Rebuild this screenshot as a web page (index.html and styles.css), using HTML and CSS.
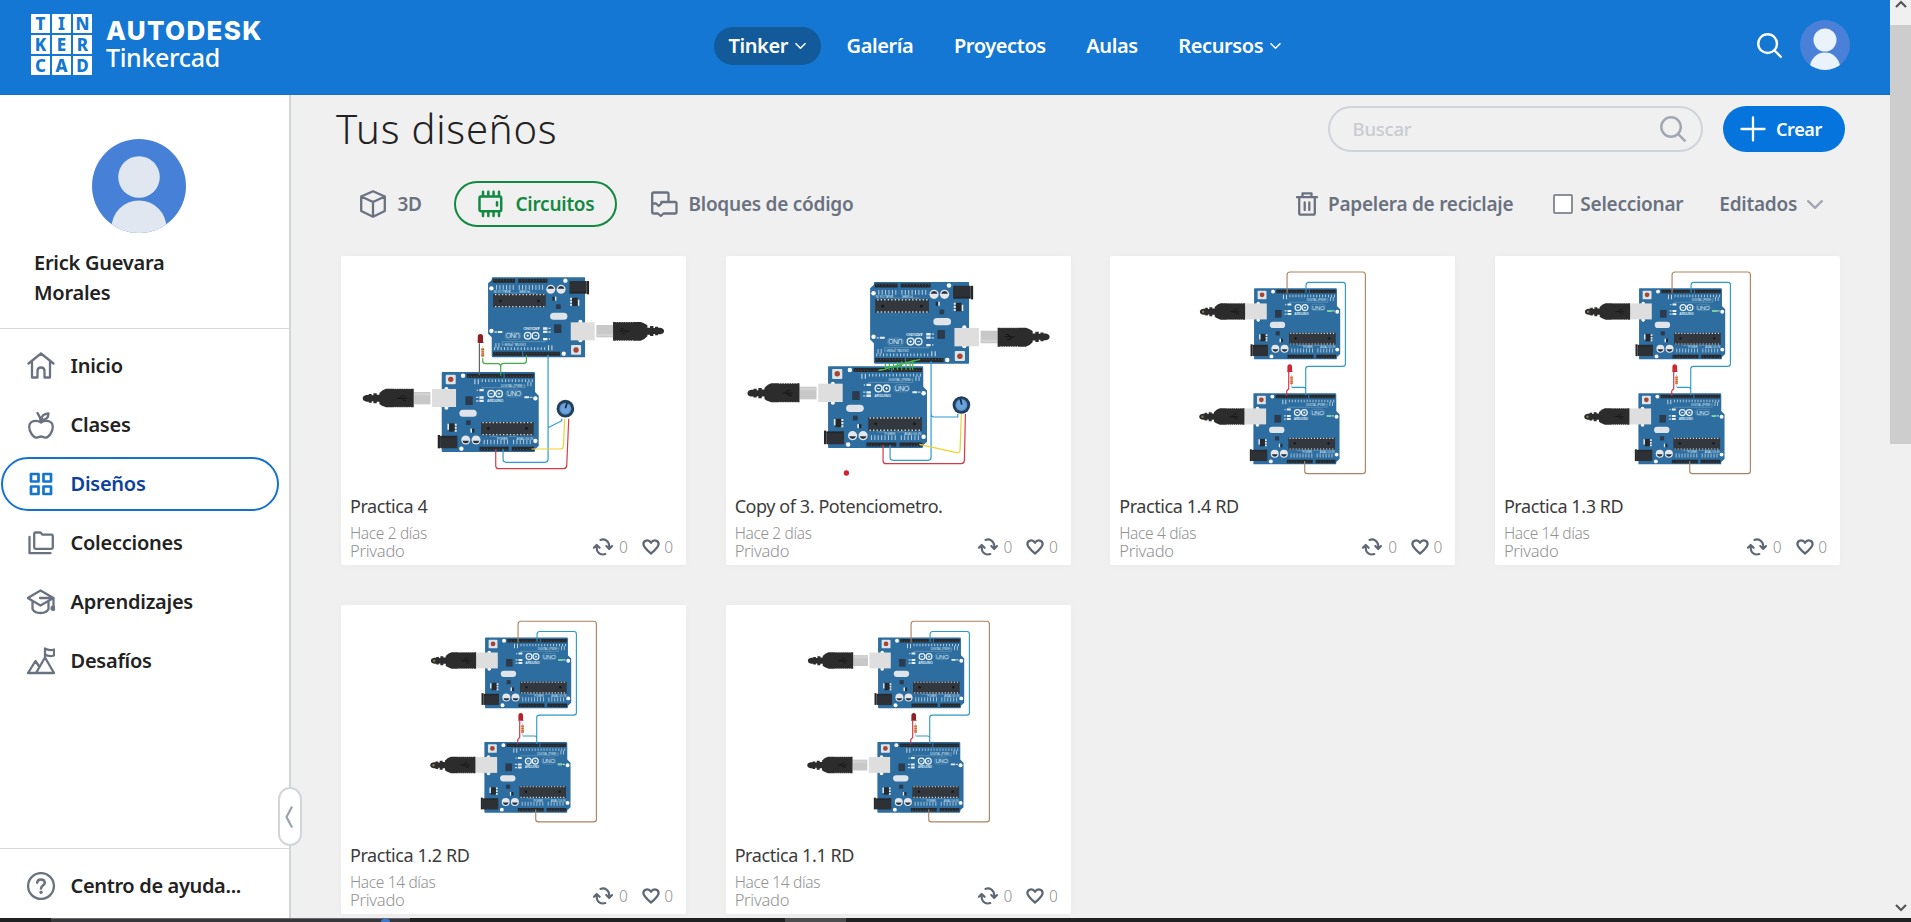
FILE: index.html
```html
<!DOCTYPE html>
<html lang="es">
<head>
<meta charset="utf-8">
<title>Tinkercad - Tus diseños</title>
<link rel="stylesheet" href="styles.css">
</head>
<body>
<svg class="sprites" aria-hidden="true">
  <symbol id="i-search" viewBox="0 0 24 24"><g fill="none" stroke="currentColor" stroke-width="2.300" stroke-linecap="round"><circle cx="10.2" cy="10.2" r="9"/><path d="M16.800 16.800 22.800 22.800"/></g></symbol>
  <symbol id="i-chev" viewBox="0 0 16 9"><path d="M1.200 1.200 8 7.800l6.800-6.600" fill="none" stroke="currentColor" stroke-width="2.400" stroke-linecap="round" stroke-linejoin="round"/></symbol>
  <symbol id="i-recycle" viewBox="0 0 20 18"><g fill="none" stroke="currentColor" stroke-width="2.100" stroke-linecap="round" stroke-linejoin="round"><path d="M7.500 1.900C12 .2 16.200 3.500 16.200 8v2.200M13.300 8l2.900 2.900L19 8M12.300 16.100C7.800 17.600 3.700 14.500 3.700 10V7.800M.9 9.800l2.800-2.900 2.900 2.900"/></g></symbol>
  <symbol id="i-heart" viewBox="0 0 18 16"><path d="M9 14.600C4.500 10.800 1.400 8.300 1.400 5.100 1.400 1.300 6.500-.1 9 3.700c2.500-3.800 7.600-2.400 7.600 1.400 0 3.200-3.100 5.700-7.600 9.500z" fill="none" stroke="currentColor" stroke-width="2.300" stroke-linejoin="round"/></symbol>

  <symbol id="board" viewBox="0 0 300 245" overflow="visible">
    <path d="M2 0H276q4 0 4 4V60l11 11V222l-11 10v4q0 4-4 4H2q-2 0-2-2V2q0-2 2-2z" fill="#2d6d9f"/>
    <g fill="#fff"><circle cx="64" cy="11" r="6.500"/><circle cx="281" cy="79" r="6.500"/><circle cx="281" cy="207" r="6.500"/><circle cx="59" cy="230" r="6.500"/><circle cx="14" cy="51" r="6"/><circle cx="14" cy="107" r="6"/></g>
    <rect x="12" y="8" width="30" height="29" rx="3" fill="#dbe4ea"/><circle cx="27" cy="22" r="8" fill="#a8442f"/>
    <rect x="-29" y="51" width="72" height="54" fill="#dedede"/>
    <rect x="71" y="73" width="22" height="26" fill="#2b3b4d"/>
    <rect x="53" y="113" width="52" height="21" rx="10.500" fill="#dfe4ea"/>
    <rect x="73" y="145" width="14" height="14" fill="#2b3b4d"/>
    <path d="M17 155h6v18h-6zM37 155h8v6h-8zM37 164h8v6h-8zM37 173h8v6h-8z" fill="#e4ebf0"/><rect x="22" y="154" width="17" height="25" fill="#26292d"/>
    <path d="M86 170h5v12h-5z" fill="#e4ebf0"/><path d="M91 170h7v12h-7z" fill="#222c38"/>
    <rect x="-12" y="189" width="7" height="40" fill="#24262a"/><rect x="-5" y="191" width="52" height="38" rx="3" fill="#2d3034"/><path d="M-3 195h42l6-4" fill="none" stroke="#16181b" stroke-width="1.500"/>
    <circle cx="72" cy="204" r="13.500" fill="#e3e6ea"/><circle cx="103" cy="204" r="13.500" fill="#e3e6ea"/>
    <path d="M62 206h20q-2 8-10 8t-10-8zM93 206h20q-2 8-10 8t-10-8z" fill="#23303f"/>
    <rect x="118" y="150" width="158" height="40" fill="#33383e"/>
    <path d="M122 152H274M122 188H274" stroke="#d4dbe0" stroke-width="4" stroke-dasharray="4 6.300"/>
    <circle cx="140" cy="169" r="4" fill="#14171a"/><circle cx="254" cy="169" r="4" fill="#14171a"/>
    <path d="M75 5h110v12H75zM189 5h87v12H189zM113 224h88v12h-88zM210 224h67v12h-67z" fill="#272a2d"/>
    <path d="M80 13H274M118 232H274" stroke="#626a70" stroke-width="3" stroke-dasharray="2 7"/>
    <path d="M98 29h14" stroke="#d5e2ec" stroke-width="15" stroke-dasharray="3 7"/>
    <path d="M120 26H276" stroke="#d5e2ec" stroke-width="8" stroke-dasharray="3 7" opacity=".85"/>
    <path d="M257 36h18" stroke="#d5e2ec" stroke-width="14" stroke-dasharray="3 6" opacity=".8"/>
    <path d="M126 210H200M214 210H274" stroke="#d5e2ec" stroke-width="14" stroke-dasharray="3 7" opacity=".8"/>
    <path d="M118 47H250M146 193h22M202 193h22" stroke="#c3d6e4" stroke-width="1.200" opacity=".8"/>
    <text x="178" y="44" class="silk" font-size="9.500" textLength="72">DIGITAL (PWM~)</text>
    <text x="166" y="203" class="silk" font-size="9" textLength="32">POWER</text>
    <text x="224" y="203" class="silk" font-size="9" textLength="50">ANALOG IN</text>
    <text x="136" y="90" class="silk silk-b" font-size="11" textLength="49">ARDUINO</text>
    <g fill="none" stroke="#edf4f8" stroke-width="4"><circle cx="148.500" cy="65" r="10"/><circle cx="172" cy="65" r="10"/></g>
    <path d="M144 65h8M168 65h8M172 61v8" stroke="#edf4f8" stroke-width="2.500"/>
    <rect x="193" y="54" width="47" height="21" rx="10" fill="none" stroke="#8fb3cc" stroke-width="1.200"/>
    <text x="196" y="72" class="silk" font-size="20" textLength="42">UNO</text>
    <path d="M113 51h13v7h-13zM113 73h13v7h-13zM113 83h13v7h-13zM248 73h14v6h-14z" fill="#e9f0f5"/>
    <path d="M103 76h7M103 87h7M105 55h4M264 76h8" stroke="#bcd2e1" stroke-width="4"/>
  </symbol>
  <symbol id="plug" viewBox="0 0 200 60" overflow="visible">
    <rect x="152" y="11" width="50" height="37" fill="#c8c8c8"/><rect x="152" y="15" width="50" height="6" fill="#d4d4d4"/>
    <path d="M10 20q-11 2-11 10t11 10h7v3h9v-4h5v6h10v-5h8v7q6 5 12 7l8 3H152V1H69q-10 2-20 13v5h-8v-4H31v6h-5v-4h-9v3z" fill="#2c2c2c"/>
    <path d="M92 1H148M92 57H148" stroke="#fff" stroke-width="2.400" stroke-dasharray="3 4"/>
    <path d="M102 30h30M110 29l7-7h8M116 31l6 6h7" fill="none" stroke="#171717" stroke-width="3"/>
  </symbol>
  <symbol id="unit" viewBox="0 0 300 245" overflow="visible"><use href="#plug" x="-236" y="49" width="200" height="60"/><use href="#board" width="300" height="245"/></symbol>
  <symbol id="unit-on" viewBox="0 0 300 245" overflow="visible"><use href="#plug" x="-182" y="49" width="200" height="60"/><circle cx="-172" cy="79" r="4" fill="#877b43"/><use href="#board" width="300" height="245"/><path d="M248 73h14v6h-14z" fill="#65d78c"/></symbol>
  <symbol id="pot" viewBox="0 0 54 54" overflow="visible"><circle cx="27" cy="27" r="26.500" fill="#213f5a"/><circle cx="27" cy="27" r="18" fill="#5d94cc"/><circle cx="27" cy="27" r="14" fill="#6ba3dc"/></symbol>
  <symbol id="resistor" viewBox="0 0 12 34" overflow="visible"><path d="M6-8V40" stroke="#aaa" stroke-width="2"/><path d="M1 0h10v8l-1 3v8l1 3v8H1v-8l1-3v-8l-1-3z" fill="#e3a667"/><path d="M1 5h10M1 13h10M1 20h10M1 26h10" stroke="#b65329" stroke-width="3"/></symbol>
  <symbol id="dual" viewBox="0 0 1035 720" overflow="visible">
    <use href="#unit-on" x="0" y="0" width="300" height="245" transform="translate(447 115) scale(.888)"/>
    <use href="#unit-on" x="0" y="0" width="300" height="245" transform="translate(445 430) scale(.888)"/>
    <use href="#dual-wires" width="1035" height="720"/>
  </symbol>
  <symbol id="dual-wires" viewBox="0 0 1035 720" overflow="visible">
    <g fill="none" stroke-width="3.400"><path d="M546 130V75q0-9 9-9H773q8 0 8 9V663q0 8-8 8H607q-8 0-8-8V633" stroke="#ae8263"/><path d="M603 128V106q0-9 8-9H714q7 0 7 8V341q0 8-8 8H610q-8 0-8 8V436M602 418q0-6-7-6H560" stroke="#2c9ac6"/><path d="M551 366V416l-6 7V438" stroke="#cf2c3f"/></g>
    <use href="#resistor" x="554" y="379" width="11" height="27"/>
  </symbol>
</svg>

<div class="app">
  <div class="view">
    <header class="top">
      <div class="brand">
        <div class="tiles"><b>T</b><b>I</b><b>N</b><b>K</b><b>E</b><b>R</b><b>C</b><b>A</b><b>D</b></div>
        <div class="wordmark"><span class="autodesk">AUTODESK</span><span class="tinkercad">Tinkercad</span></div>
      </div>
      <nav class="nav">
        <a class="on">Tinker<svg class="nav-chev"><use href="#i-chev"/></svg></a>
        <a>Galería</a><a>Proyectos</a><a>Aulas</a>
        <a>Recursos<svg class="nav-chev"><use href="#i-chev"/></svg></a>
      </nav>
      <div class="top-right">
        <svg class="top-search"><use href="#i-search"/></svg>
        <svg class="top-avatar" viewBox="0 0 50 50"><clipPath id="ca"><circle cx="25" cy="25" r="25"/></clipPath><g clip-path="url(#ca)"><path d="M0 0h50v50H0z" fill="#4a80d8"/><circle cx="25" cy="20" r="11.500" fill="#eaf2fc"/><circle cx="25" cy="47.500" r="15" fill="#eaf2fc"/></g></svg>
      </div>
    </header>
    <div class="body">
      <aside class="side">
        <div class="profile">
          <svg class="avatar" viewBox="0 0 94 94"><clipPath id="cb"><circle cx="47" cy="47" r="47"/></clipPath><g clip-path="url(#cb)"><path d="M0 0h94v94H0z" fill="#4780d7"/><circle cx="47" cy="38" r="20.800" fill="#e0e7f1"/><circle cx="47" cy="89" r="27.500" fill="#e0e7f1"/></g></svg>
          <div class="name">Erick Guevara<br>Morales</div>
        </div>
        <ul class="menu">
          <li><svg class="ico" viewBox="0 0 28 28"><path d="M1.500 11.500 14 1.500l12.500 10M5 9.500V25.500h5.500V19q0-3.500 3.500-3.500t3.500 3.500v6.500H23V9.500"/></svg><span>Inicio</span></li>
          <li><svg class="ico" viewBox="0 0 28 28"><path d="M14 11.500C10 8.800 2.200 9 2.200 16c0 5 4.300 10.700 7.500 10.700 2 0 2.400-1.200 4.300-1.200s2.300 1.200 4.300 1.200c3.200 0 7.500-5.700 7.500-10.700 0-7-7.800-7.200-11.800-4.500zM14 11.500Q13.500 6 10.500 2M14.500 9q-.5-6 7-6.500 0 6.500-7 6.500z"/></svg><span>Clases</span></li>
          <li class="on"><svg class="ico" viewBox="0 0 28 28"><path d="M4 4h7.500v7.500H4zM16.500 4H24v7.500h-7.500zM4 16.500h7.500V24H4zM16.500 16.500H24V24h-7.500z"/></svg><span>Diseños</span></li>
          <li><svg class="ico" viewBox="0 0 28 28"><path d="M2.500 8V24.200H23.500M8.500 3.500h5l2 2.200h9q1.300 0 1.300 1.300v11.500q0 1.300-1.300 1.300h-16q-1.300 0-1.300-1.300V4.800q0-1.300 1.300-1.300z"/></svg><span>Colecciones</span></li>
          <li><svg class="ico" viewBox="0 0 28 28"><path d="M.8 10 13.500 2.500 26.500 10 13.500 17.500zM13 10H26.500v10M5.500 13.500V21q2 4 8 4t8-4v-7.500"/><circle cx="26.200" cy="20.300" r="1.600" fill="currentColor"/></svg><span>Aprendizajes</span></li>
          <li><svg class="ico" viewBox="0 0 28 28"><path d="M1 26 8.500 14l4 6M1 26H27L18 10.500 9 26M18 10.500V1.500q4 2.500 9 1v6q-5 1.500-9-1"/></svg><span>Desafíos</span></li>
        </ul>
        <div class="help"><svg class="ico" viewBox="0 0 28 28"><circle cx="14" cy="14" r="12.900"/><path d="M10.200 10.700q.3-3.200 3.800-3.200t3.800 3.200c0 2.800-3.800 2.900-3.800 5.800" stroke-width="2.500"/><circle cx="14" cy="20.300" r="1.300" fill="currentColor" stroke-width=".8"/></svg><span>Centro de ayuda...</span></div>
        <div class="handle"><svg viewBox="0 0 8 22"><path d="M6.700 1.300 1.500 11l5.200 9.700" fill="none" stroke="#9aa2ad" stroke-width="2.200" stroke-linecap="round" stroke-linejoin="round"/></svg></div>
      </aside>
      <main class="main">
        <div class="head">
          <h1>Tus diseños</h1>
          <div class="search"><span>Buscar</span><svg><use href="#i-search"/></svg></div>
          <div class="create"><svg viewBox="0 0 26 26"><path d="M13 1.500v23M1.500 13h23" stroke="#fff" stroke-width="2.300" stroke-linecap="round"/></svg>Crear</div>
        </div>
        <div class="tabs">
          <span class="tab t3d"><svg class="ico" viewBox="0 0 28 28"><path d="M14 1.300 25.800 6.500V21L14 26.700 2.200 21V6.500zM2.200 6.500 14 12l11.800-5.500M14 12v14.700" /></svg>3D</span>
          <span class="tab on"><svg class="ico" viewBox="0 0 28 28"><path d="M3.700 6.500H23q1.200 0 1.200 1.200V20q0 1.200-1.200 1.200H3.700Q2.500 21.200 2.500 20v-2.500M2.500 17.500v-7M2.500 10.500V7.700Q2.500 6.500 3.700 6.500M6 1.800v4M11.300 1.800v4M16.600 1.800v4M22 1.800v4M6 22v4M11.300 22v4M16.600 22v4M22 22v4M20 12.200v3.400"/></svg>Circuitos</span>
          <span class="tab code"><svg class="ico" viewBox="0 0 28 28"><path d="M3.500 2.500H17q1.500 0 1.500 1.500v8H25q1.500 0 1.500 1.500V22q0 1.500-1.500 1.500H13.500L10.800 26 8 23.500H4Q2.200 23.500 2.200 22V4Q2.200 2.500 3.500 2.500zM2.200 13.500H6l2.700 2.500 2.600-2.500v-1.500h7.200"/></svg>Bloques de código</span>
          <span class="tool trash"><svg class="ico" viewBox="0 0 22 24"><path d="M1 5.200h20M6.500 5V1.300h9V5M3.200 5.500V21q0 1.700 1.700 1.700H17q1.800 0 1.800-1.700V5.500M8.700 10.500v7.500M13.300 10.500v7.500"/></svg>Papelera de reciclaje</span>
          <span class="tool select"><i></i>Seleccionar</span>
          <span class="tool sort">Editados<svg><use href="#i-chev"/></svg></span>
        </div>
        <div class="grid">
          <article class="card">
            <svg class="thumb" viewBox="18 18 1035 714">
              <g transform="translate(750 322) rotate(180)"><use href="#unit" width="300" height="245"/></g>
              <use href="#unit" x="320" y="366" width="300" height="245"/>
              <g fill="none" stroke-width="3.600"><path d="M433 280V376" stroke="#636363"/><path d="M443 325v8q0 8 8 8h37q9 0 9 9v27M497 350q0-10 9-10h60q8 0 8-8V314" stroke="#42ad49"/><path d="M639 314V628q0 9-9 9H514q-10 0-10-9V596M639 533l41-21V506" stroke="#2e9bd0"/><path d="M589 597h87q9 0 9-9l4-82" stroke="#eed231"/><path d="M482 597v50q0 9 9 9H685q9 0 10-9l6-141" stroke="#d43b45"/></g>
              <path d="M428 276v-16q0-8 8-8t8 8v16l3 3h-19z" fill="#8b2025"/><use href="#resistor" x="437" y="294" width="12" height="30"/>
              <use href="#pot" x="664" y="449" width="54" height="54"/><path d="M691 475l5-16" stroke="#14293d" stroke-width="5"/>
            </svg>
            <h2>Practica 4</h2>
            <div class="foot"><div class="meta">Hace 2 días<span>Privado</span></div><div class="stats"><svg class="rec"><use href="#i-recycle"/></svg>0<svg class="heart"><use href="#i-heart"/></svg>0</div></div>
          </article>
          <article class="card">
            <svg class="thumb" viewBox="18 18 1035 714">
              <g transform="translate(747 341) rotate(180) scale(1.020)"><use href="#unit" width="300" height="245"/></g>
              <g transform="translate(324 349) scale(1.020)"><use href="#unit" width="300" height="245"/></g>
              <g fill="none" stroke-width="3.600"><path d="M475 361l125-33M482 361l102-30M496 340v20M508 340v20M520 338v22M532 336v24M545 334v26M558 334v26M570 334v26M578 334v26" stroke="#45b64b"/><path d="M633 333V622q0 9-9 9H520q-10 0-10-9V585M633 492q0 9 9 9h71V492" stroke="#2e9bd0"/><path d="M598 583l111 25q10 2 11-8l4-108" stroke="#eed231"/><path d="M489 584v48q0 9 9 9H723q9 0 10-9l3-140" stroke="#d43b45"/></g>
              <use href="#pot" x="697" y="438" width="54" height="54"/><path d="M725 464l-4-17" stroke="#14293d" stroke-width="5"/>
              <circle cx="379" cy="669" r="8" fill="#d2232e"/>
            </svg>
            <h2>Copy of 3. Potenciometro.</h2>
            <div class="foot"><div class="meta">Hace 2 días<span>Privado</span></div><div class="stats"><svg class="rec"><use href="#i-recycle"/></svg>0<svg class="heart"><use href="#i-heart"/></svg>0</div></div>
          </article>
          <article class="card">
            <svg class="thumb" viewBox="15 18 1035 714"><use href="#dual" width="1035" height="720"/><path d="M547 363v-12q0-8 7-8t7 8v12l2 3h-17z" fill="#cf2734"/></svg>
            <h2>Practica 1.4 RD</h2>
            <div class="foot"><div class="meta">Hace 4 días<span>Privado</span></div><div class="stats"><svg class="rec"><use href="#i-recycle"/></svg>0<svg class="heart"><use href="#i-heart"/></svg>0</div></div>
          </article>
          <article class="card">
            <svg class="thumb" viewBox="15 18 1035 714"><use href="#dual" width="1035" height="720"/><path d="M547 363v-12q0-8 7-8t7 8v12l2 3h-17z" fill="#cf2734"/></svg>
            <h2>Practica 1.3 RD</h2>
            <div class="foot"><div class="meta">Hace 14 días<span>Privado</span></div><div class="stats"><svg class="rec"><use href="#i-recycle"/></svg>0<svg class="heart"><use href="#i-heart"/></svg>0</div></div>
          </article>
          <article class="card">
            <svg class="thumb" viewBox="18 14 1035 714"><g transform="translate(3 -3) scale(1 .995)"><use href="#dual" width="1035" height="720"/><path d="M547 363v-12q0-8 7-8t7 8v12l2 3h-17z" fill="#b5222c"/></g></svg>
            <h2>Practica 1.2 RD</h2>
            <div class="foot"><div class="meta">Hace 14 días<span>Privado</span></div><div class="stats"><svg class="rec"><use href="#i-recycle"/></svg>0<svg class="heart"><use href="#i-heart"/></svg>0</div></div>
          </article>
          <article class="card">
            <svg class="thumb" viewBox="18 14 1035 714"><g transform="translate(27 -3) scale(1 .995)"><g transform="translate(447 115) scale(.888)"><use href="#unit" width="300" height="245"/></g><g transform="translate(445 430) scale(.888)"><use href="#unit" width="300" height="245"/></g><use href="#dual-wires" width="1035" height="720"/><path d="M547 363v-12q0-8 7-8t7 8v12l2 3h-17z" fill="#8b2025"/></g></svg>
            <h2>Practica 1.1 RD</h2>
            <div class="foot"><div class="meta">Hace 14 días<span>Privado</span></div><div class="stats"><svg class="rec"><use href="#i-recycle"/></svg>0<svg class="heart"><use href="#i-heart"/></svg>0</div></div>
          </article>
        </div>
      </main>
    </div>
  </div>
  <div class="scroll"><svg viewBox="0 0 12 8"><path d="M1 7 6 2l5 5"/></svg><div class="thumb-bar"></div><svg viewBox="0 0 12 8"><path d="M1 1l5 5 5-5"/></svg></div>
</div>
<div class="taskbar"><span class="seg"><i></i></span><span class="seg2"></span></div>
</body>
</html>
```
FILE: styles.css
```css
* { box-sizing: border-box; }
body { margin: 0; height: 922px; overflow: hidden; background: #f0f0f0; color: #222; font-family: "Noto Sans", "Open Sans", sans-serif; }
.sprites { display: none; }
.silk { font-family: "Liberation Sans", sans-serif; fill: #dce8f0; }
.silk-b { font-weight: bold; }
.app { display: flex; height: 918px; overflow: hidden; }
.view { width: 1890px; display: flex; flex-direction: column; }

.top { height: 95px; flex: none; background: #1477d3; border-bottom: 1px solid #1c70c0; display: grid; grid-template-columns: 714px 1fr auto; color: #fff; }
.brand { display: flex; padding: 14px 0 0 31px; gap: 14px; }
.tiles { display: grid; grid-template-columns: repeat(3, 19px); grid-template-rows: repeat(3, 19px); gap: 2px; }
.tiles b { background: #fff; color: #1477d3; font-size: 17px; line-height: 19px; text-align: center; font-weight: 800; }
.wordmark { display: flex; flex-direction: column; padding-top: 4px; }
.autodesk { font: 800 26px/26px Inter, sans-serif; letter-spacing: 1.300px; }
.tinkercad { font-size: 25px; line-height: 27px; font-weight: 500; letter-spacing: -.35px; }
.nav { display: flex; align-items: center; height: 38px; margin-top: 27px; font-size: 20px; font-weight: 600; letter-spacing: -.4px; }
.nav a { display: flex; align-items: center; gap: 7px; height: 38px; border-radius: 19px; padding: 0 14.500px; margin-right: 11.500px; line-height: 38px; }
.nav a.on { background: #125a99; }
.nav-chev { width: 11px; height: 6px; }
.top-right { display: flex; padding: 20px 40px 0 0; gap: 18px; }
.top-search { width: 25px; height: 25px; margin-top: 13px; }
.top-avatar { width: 50px; height: 50px; }

.body { flex: 1; display: flex; min-height: 0; }
.side { width: 291px; flex: none; position: relative; background: #fff; border-right: 2px solid #d2d5da; display: flex; flex-direction: column; font-size: 20px; font-weight: 560; letter-spacing: -.25px; }
.profile { height: 234px; border-bottom: 1px solid #d6d8dc; padding-top: 44px; }
.avatar { display: block; width: 94px; height: 94px; margin-left: 92px; }
.name { margin: 15px 0 0 34px; line-height: 30px; }
.menu { list-style: none; margin: 10px 0 0; padding: 0 10px 0 1px; display: flex; flex-direction: column; gap: 5px; }
.menu li { height: 54px; border-radius: 27px; border: 2px solid transparent; display: flex; align-items: center; gap: 15.500px; padding-left: 24px; }
.menu li span, .help span { padding-bottom: 2px; }
.menu li.on { border-color: #1573cb; color: #0d3f9e; }
.ico { width: 28px; height: 28px; flex: none; color: #6a7180; fill: none; stroke: currentColor; stroke-width: 2.300; stroke-linecap: round; stroke-linejoin: round; }
.menu li.on .ico { color: #1475d1; stroke-width: 2.700; }
.help { margin-top: auto; height: 70px; border-top: 1px solid #d6d8dc; display: flex; align-items: center; gap: 15.500px; padding: 5px 0 0 27px; font-weight: 600; letter-spacing: -.35px; }
.handle { position: absolute; left: 278px; top: 692px; width: 24px; height: 59px; background: #fff; border: 2px solid #d2d5da; border-radius: 12px; display: flex; align-items: center; padding-left: 5px; }
.handle svg { width: 8px; height: 22px; }

.main { flex: 1; min-width: 0; padding: 11px 45px 0 46px; }
.head { display: flex; height: 46px; align-items: center; }
h1 { margin: 0 auto 0 -1px; font-size: 40px; line-height: 46px; font-weight: 350; letter-spacing: .8px; }
.search { width: 375px; height: 46px; border: 2px solid #d0d3da; border-radius: 23px; display: flex; align-items: center; justify-content: space-between; padding: 0 15px 0 22.500px; margin-right: 20px; font-size: 18.500px; font-weight: 500; letter-spacing: -.2px; color: #c8cbd0; }
.search span { padding-bottom: 1px; }
.search svg { width: 26px; height: 26px; color: #a2a8b2; }
.create { width: 122px; height: 46px; border-radius: 23px; background: #0574dc; color: #fff; display: flex; align-items: center; gap: 10px; padding-left: 17px; font-size: 18px; font-weight: 600; letter-spacing: -.4px; }
.create svg { width: 26px; height: 26px; }
.tabs { display: flex; align-items: center; height: 46px; margin-top: 29px; font-size: 19px; font-weight: 560; letter-spacing: -.25px; color: #6a7180; white-space: nowrap; }
.tab { display: flex; align-items: center; gap: 10.500px; height: 46px; }
.t3d { width: 117px; padding-left: 22px; }
.tab.on { width: 163px; border: 2px solid #128940; border-radius: 23px; padding-left: 21px; color: #128940; }
.tab.on .ico { color: #128940; stroke-width: 2.500; }
.code { margin-left: 33px; }
.tool { display: flex; align-items: center; }
.trash { margin-left: auto; }
.trash .ico { width: 22px; height: 24px; margin-right: 10px; }
.select { margin-left: 40px; }
.select i { width: 20px; height: 20px; border: 2px solid #8a8f97; border-radius: 2px; background: #fff; margin-right: 7px; }
.sort { margin: 0 22px 0 36px; }
.sort svg { width: 16px; height: 9px; margin-left: 10px; color: #a2a8b2; }

.grid { margin: 29px 5px 0 4px; display: grid; grid-template-columns: repeat(4, 1fr); column-gap: 39.500px; row-gap: 40px; }
.card { height: 308.800px; background: #fff; border-radius: 2px; box-shadow: 0 0 10px rgba(0, 0, 0, .03); }
.thumb { display: block; width: 100%; height: 238px; }
h2 { margin: 0 0 6px 9px; font-size: 18px; line-height: 24px; font-weight: 400; letter-spacing: -.42px; color: #3c3c3c; }
.foot { display: flex; justify-content: space-between; padding: 0 13px 0 9px; color: #929292; }
.meta { font-size: 15.500px; line-height: 18px; font-weight: 360; letter-spacing: -.35px; }
.meta span { display: block; font-size: 16.500px; letter-spacing: -.25px; }
.stats { display: flex; align-items: center; height: 18px; margin-top: 14px; font-size: 15.500px; font-weight: 360; line-height: 18px; }
.stats svg { color: #5f6675; }
.rec { width: 20px; height: 18px; margin-right: 6px; }
.heart { width: 18px; height: 16px; margin: 0 4.500px 0 14px; }

.scroll { width: 21px; background: #f0f0f0; display: flex; flex-direction: column; align-items: center; }
.scroll svg { width: 12px; height: 8px; margin-bottom: 17px; fill: none; stroke: #555; stroke-width: 2.200; }
.thumb-bar { width: 21px; height: 419px; background: #cdcdcd; margin-bottom: auto; }
.scroll svg:last-child { margin-bottom: 6px; }
.taskbar { height: 4px; background: #1e2021; display: flex; }
.seg { width: 359px; margin-left: 51px; background: #35373a; border-top: 1px solid #67696b; padding-left: 330px; }
.seg i { display: block; width: 9px; height: 3px; border-radius: 5px 5px 0 0; background: #3b78d0; }
.seg2 { width: 61px; margin-left: 375px; background: #4b4d4f; }
```
